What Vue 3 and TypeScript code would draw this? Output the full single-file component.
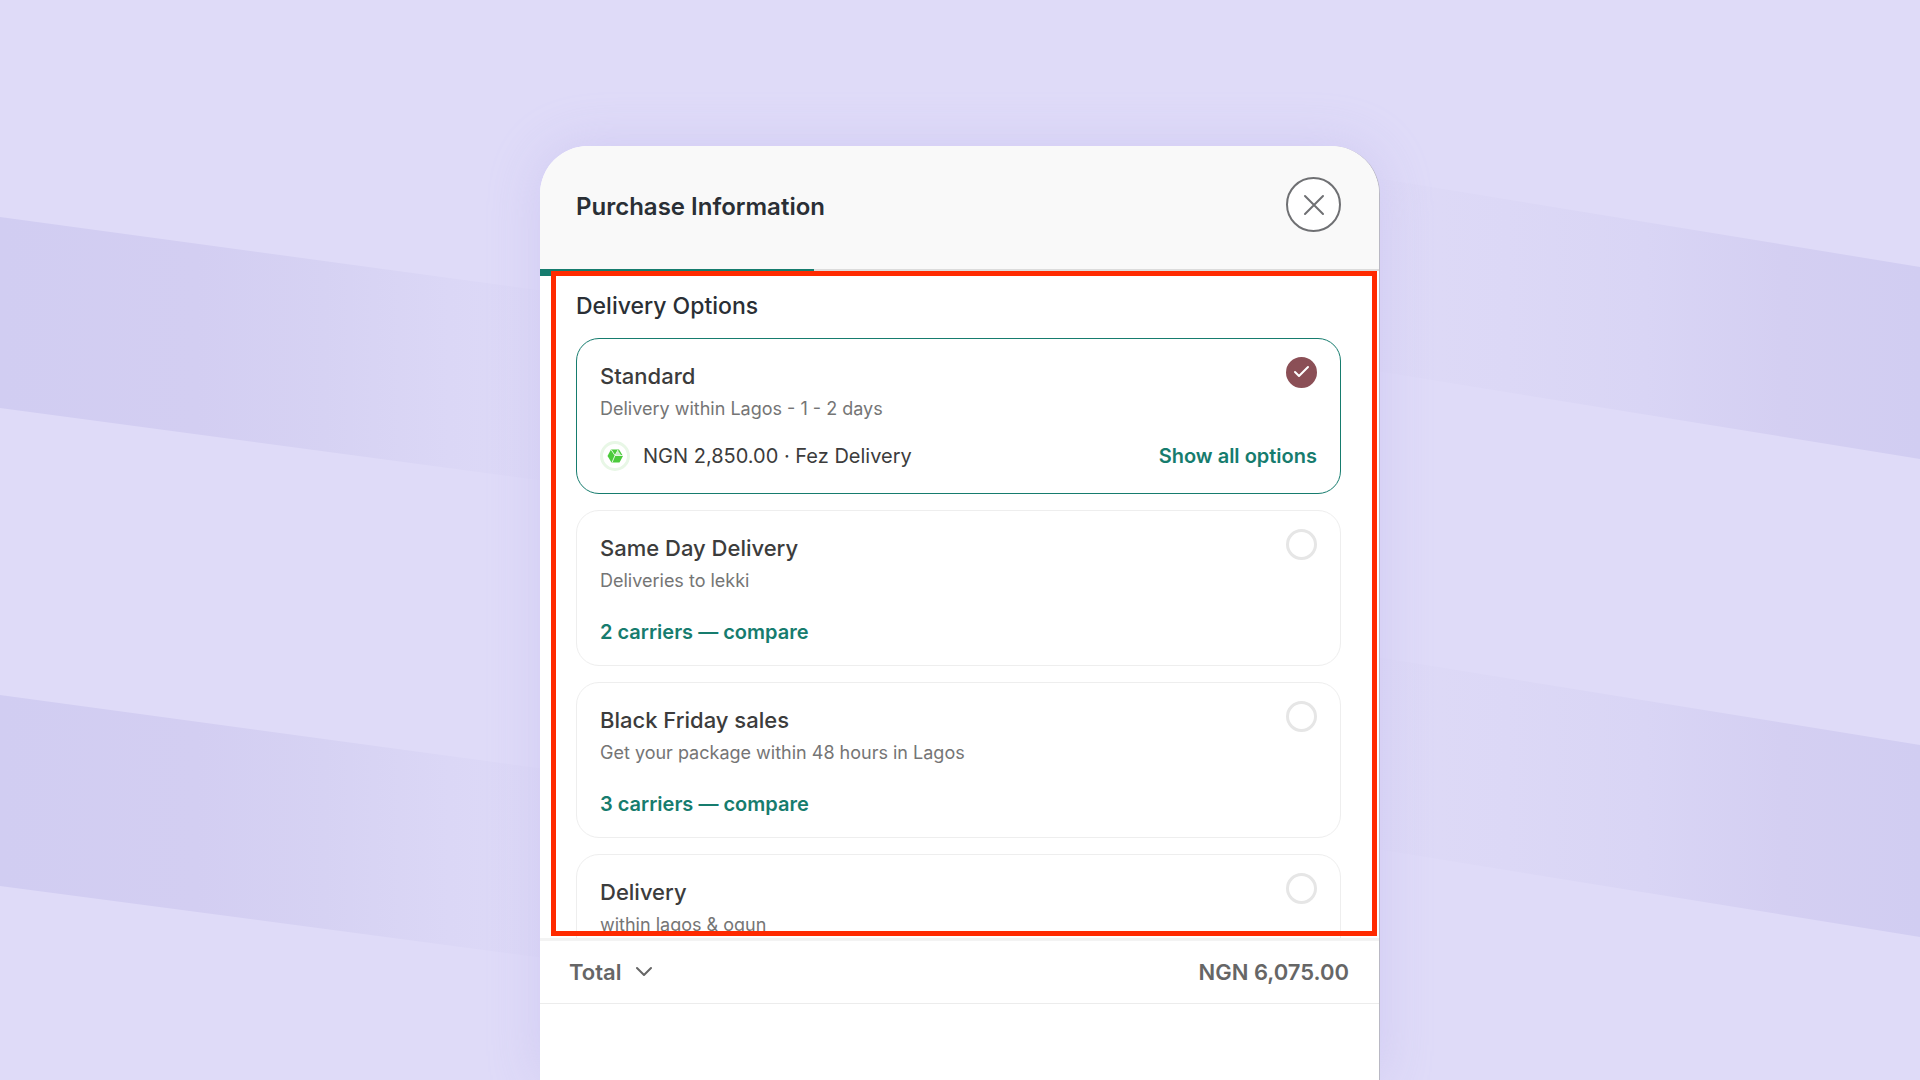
<script setup lang="ts">
import { ref } from 'vue'

interface DeliveryOption {
  id: string
  name: string
  detail: string
  quote?: string
  action?: string
}

const options: DeliveryOption[] = [
  { id: 'standard', name: 'Standard', detail: 'Delivery within Lagos - 1 - 2 days', quote: 'NGN 2,850.00 · Fez Delivery', action: 'Show all options' },
  { id: 'same-day', name: 'Same Day Delivery', detail: 'Deliveries to lekki', action: '2 carriers — compare' },
  { id: 'black-friday', name: 'Black Friday sales', detail: 'Get your package within 48 hours in Lagos', action: '3 carriers — compare' },
  { id: 'delivery', name: 'Delivery', detail: 'within lagos & ogun' },
]

const selected = ref('standard')
</script>

<template>
  <div class="page">
    <svg class="backdrop" viewBox="0 0 1920 1080" preserveAspectRatio="none" aria-hidden="true">
      <defs>
        <linearGradient id="fade-left" gradientUnits="userSpaceOnUse" x1="0" y1="0" x2="560" y2="0">
          <stop offset="0" stop-color="#d1cdf2" />
          <stop offset="0.35" stop-color="#d3cef2" />
          <stop offset="0.58" stop-color="#d6d2f3" />
          <stop offset="0.8" stop-color="#dbd7f6" />
          <stop offset="1" stop-color="#dedaf7" />
        </linearGradient>
        <linearGradient id="fade-right" gradientUnits="userSpaceOnUse" x1="1920" y1="0" x2="1370" y2="0">
          <stop offset="0" stop-color="#d1cdf2" />
          <stop offset="0.25" stop-color="#d4cff2" />
          <stop offset="0.5" stop-color="#d9d5f5" />
          <stop offset="0.75" stop-color="#dcd8f6" />
          <stop offset="1" stop-color="#dedaf7" />
        </linearGradient>
      </defs>
      <path fill="url(#fade-left)" d="M0 217L560 293V483L0 408ZM0 695L560 771V960L0 886Z" />
      <path fill="url(#fade-right)" d="M1920 267L1370 177V370L1920 459ZM1920 745L1370 656V848L1920 937Z" />
    </svg>

    <main class="sheet">
      <header class="sheet-head">
        <h1>Purchase Information</h1>
        <button class="close" type="button" aria-label="Close">
          <svg viewBox="0 0 24 24" aria-hidden="true"><path d="M3 3L21 21M21 3L3 21" /></svg>
        </button>
      </header>
      <div class="progress"><div class="progress-done"></div></div>

      <section class="delivery">
        <h2>Delivery Options</h2>
        <div class="cards">
          <article v-for="option in options" :key="option.id" class="card" :class="{ active: selected === option.id }">
            <div class="card-top">
              <label :for="option.id">{{ option.name }}</label>
              <span class="pick">
                <input :id="option.id" v-model="selected" type="radio" name="delivery" :value="option.id" />
                <svg v-if="selected === option.id" viewBox="0 0 31 31" aria-hidden="true"><path d="M9 15L13 19L22 10" /></svg>
              </span>
            </div>
            <p class="detail">{{ option.detail }}</p>
            <div v-if="option.action" class="card-foot">
              <span v-if="option.quote" class="quote">
                <svg class="carrier" viewBox="0 0 30 30" aria-hidden="true">
                  <circle cx="15" cy="15" r="13.5" />
                  <path d="M11 8.500H19L23 15L19.500 21.500H11.500L7.500 15Z" />
                  <path class="facet" d="M18 9.500L21 14H15Z" />
                  <path class="cut" d="M11 8.500L15 14.500L12 21.500M15 14.500L18 9M15 14.500H23" />
                </svg>
                {{ option.quote }}
              </span>
              <button class="action" type="button">{{ option.action }}</button>
            </div>
          </article>
        </div>
        <div class="highlight" aria-hidden="true"></div>
      </section>

      <footer class="total">
        <button class="total-toggle" type="button">
          Total
          <svg viewBox="0 0 16 16" aria-hidden="true"><path d="M1 4L8 11L15 4" /></svg>
        </button>
        <strong>NGN 6,075.00</strong>
      </footer>
    </main>
  </div>
</template>

<style>
body {
  margin: 0;
  background: #dfdbf8;
}
</style>

<style scoped>
* {
  box-sizing: border-box;
}

.page {
  position: relative;
  display: flex;
  flex-direction: column;
  align-items: center;
  height: 100vh;
  padding-top: 146px;
  overflow: hidden;
  background: #dfdbf8;
  color: #3c3c3c;
  font-family: Inter, "Liberation Sans", sans-serif;
}

.backdrop {
  position: absolute;
  inset: 0;
  width: 100%;
  height: 100%;
}

.sheet {
  position: relative;
  display: flex;
  flex: 1;
  flex-direction: column;
  width: 100%;
  max-width: 840px;
  min-height: 0;
  border-right: 1px solid #b9b8c4;
  border-radius: 48px 48px 0 0;
  background: #fff;
  box-shadow: 0 0 52px rgba(178, 168, 232, 0.32);
}

.sheet-head {
  display: flex;
  align-items: flex-start;
  justify-content: space-between;
  height: 123px;
  padding: 31px 38px 0 36px;
  border-radius: 48px 48px 0 0;
  background: #f9f9f9;
}

h1,
h2 {
  margin: 0;
  color: #2a2f35;
  line-height: 32px;
}

h1 {
  padding-top: 14px;
  font-size: 24px;
  font-weight: 600;
}

.close {
  display: grid;
  place-items: center;
  width: 55px;
  height: 55px;
  padding: 0;
  border: 2px solid #6f7073;
  border-radius: 50%;
  background: #fff;
}

.close svg {
  width: 24px;
  height: 24px;
  fill: none;
  stroke: #6f7073;
  stroke-width: 2;
  stroke-linecap: round;
}

.progress {
  height: 2px;
  background: #dcdcdc;
}

.progress-done {
  width: 274px;
  height: 7px;
  background: #167c6e;
}

.delivery {
  position: relative;
  height: 667px;
  padding: 19px 38px 0 36px;
  overflow: hidden;
}

h2 {
  font-size: 23px;
  font-weight: 500;
}

.cards {
  display: flex;
  flex-direction: column;
  gap: 16px;
  padding-top: 16px;
}

.card {
  display: flex;
  flex: none;
  flex-direction: column;
  height: 156px;
  padding: 18px 23px 16px;
  border: 1px solid #eee;
  border-radius: 23px;
  background: #fff;
}

.card.active {
  border-color: #167c6e;
}

.card-top {
  display: flex;
  align-items: flex-start;
  justify-content: space-between;
}

.card-top label {
  padding-top: 3px;
  font-size: 22px;
  font-weight: 500;
  line-height: 32px;
}

.pick {
  position: relative;
  width: 31px;
  height: 31px;
}

.pick input {
  display: block;
  width: 31px;
  height: 31px;
  margin: 0;
  border: 3px solid #e6e6e6;
  border-radius: 50%;
  appearance: none;
  background: #fff;
}

.pick input:checked {
  border-color: #8b4f56;
  background: #8b4f56;
}

.pick svg {
  position: absolute;
  inset: 0;
  fill: none;
  stroke: #fff;
  stroke-width: 2;
  stroke-linecap: round;
  stroke-linejoin: round;
  pointer-events: none;
}

.detail {
  margin: 0;
  color: #757575;
  font-size: 18px;
  line-height: 34px;
}

.card-foot {
  display: flex;
  align-items: center;
  justify-content: space-between;
  height: 32px;
  margin-top: 18px;
}

.card.active .card-foot {
  margin-top: 14px;
}

.quote {
  display: flex;
  align-items: center;
  gap: 13px;
  font-size: 20px;
}

.carrier {
  width: 30px;
  height: 30px;
}

.carrier circle {
  fill: #fff;
  stroke: #e8f7e6;
  stroke-width: 3;
}

.carrier path {
  fill: #4bcb3b;
}

.carrier .facet {
  fill: #c9f0c4;
}

.carrier .cut {
  fill: none;
  stroke: #e4f8e1;
  stroke-width: 1;
}

.action,
.total-toggle {
  padding: 0;
  border: 0;
  background: none;
  font-family: inherit;
}

.action {
  color: #167c6e;
  font-size: 20px;
  font-weight: 600;
}

.highlight {
  position: absolute;
  inset: 0 2px 2px 11px;
  border: 5px solid #ff2a00;
  pointer-events: none;
}

.total {
  display: flex;
  align-items: center;
  justify-content: space-between;
  height: 66px;
  padding: 0 30px 0 29px;
  border-top: 3px solid #f3f3f3;
  border-bottom: 1px solid #ececec;
  color: #666;
  font-size: 22px;
}

.total-toggle {
  display: flex;
  align-items: center;
  gap: 15px;
  color: inherit;
  font-size: 22px;
  font-weight: 600;
}

.total-toggle svg {
  width: 16px;
  height: 16px;
  fill: none;
  stroke: #666;
  stroke-width: 2;
  stroke-linecap: round;
  stroke-linejoin: round;
}

.total strong {
  font-weight: 600;
}
</style>
